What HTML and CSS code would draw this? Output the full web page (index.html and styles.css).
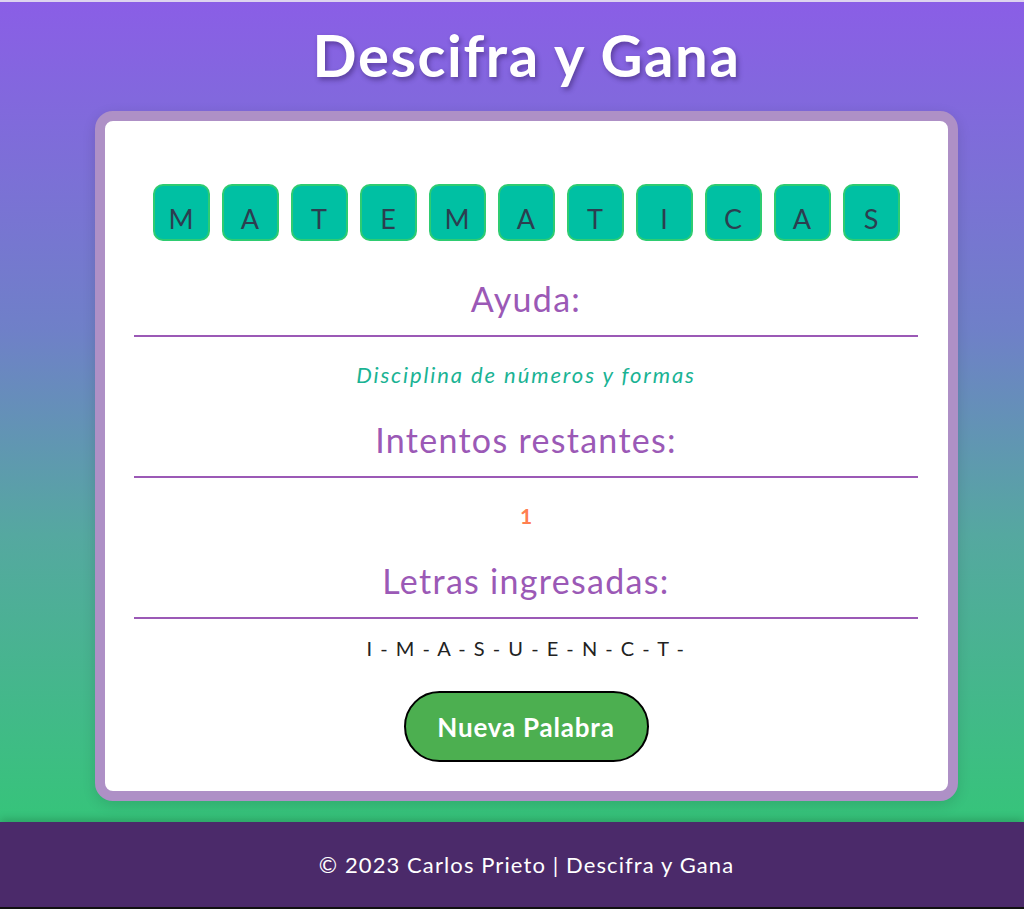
FILE: index.html
```html
<!DOCTYPE html>
<html lang="es">
<head>
<meta charset="utf-8">
<title>Descifra y Gana</title>
<link rel="stylesheet" href="styles.css">
</head>
<body>
<div class="page">
  <header class="header">
    <h1 class="title">Descifra y Gana</h1>
  </header>
  <main class="main">
    <section class="card">
      <div class="card-inner">
        <div class="tiles">
          <span class="tile">M</span>
          <span class="tile">A</span>
          <span class="tile">T</span>
          <span class="tile">E</span>
          <span class="tile">M</span>
          <span class="tile">A</span>
          <span class="tile">T</span>
          <span class="tile">I</span>
          <span class="tile">C</span>
          <span class="tile">A</span>
          <span class="tile">S</span>
        </div>
        <h2 class="section-title first">Ayuda:</h2>
        <p class="hint">Disciplina de números y formas</p>
        <h2 class="section-title">Intentos restantes:</h2>
        <p class="attempts">1</p>
        <h2 class="section-title">Letras ingresadas:</h2>
        <p class="letters">I - M - A - S - U - E - N - C - T -</p>
        <div class="actions">
          <button class="btn" type="button">Nueva Palabra</button>
        </div>
      </div>
    </section>
  </main>
</div>
<footer class="footer">
  <p class="footer-text">© 2023 Carlos Prieto | Descifra y Gana</p>
</footer>
</body>
</html>
```

FILE: styles.css
```css
* { box-sizing: border-box; }

html, body {
  margin: 0;
  padding: 0;
}

body {
  font-family: "Lato", "Noto Sans", sans-serif;
  border-top: 2px solid #ddd3ef;
  background: #111;
}

.page {
  background: linear-gradient(180deg, #8a5ee6 0%, #6f80c8 40%, #55a8a0 65%, #36c47a 100%);
  height: 820px;
  padding-left: 29px;
  display: flex;
  flex-direction: column;
  align-items: center;
}

.header {
  height: 109px;
  display: flex;
  align-items: flex-start;
  justify-content: center;
  width: 100%;
}

.title {
  margin: 18px 0 0;
  font-size: 58px;
  line-height: 70px;
  font-weight: 700;
  letter-spacing: 1.6px;
  color: #fff;
  text-shadow: 2px 3px 5px rgba(40, 20, 80, 0.45);
}

.main {
  width: 100%;
  display: flex;
  justify-content: center;
}

.card {
  width: 863px;
  border: 10px solid #ae90c6;
  border-radius: 18px;
  background: #fff;
  box-shadow: 0 4px 14px rgba(0, 0, 0, 0.12);
}

.card-inner {
  padding: 63px 30px 29px 29px;
  display: flex;
  flex-direction: column;
  align-items: stretch;
  text-align: center;
}

.tiles {
  display: flex;
  justify-content: center;
  gap: 12px;
}

.tile {
  width: 57px;
  height: 57px;
  background: #00c0a3;
  border: 2px solid #2ecc71;
  border-radius: 10px;
  color: #2c3e50;
  font-size: 27px;
  line-height: 1;
  display: flex;
  align-items: flex-end;
  justify-content: center;
  padding-bottom: 7px;
}

.section-title {
  margin: 31px 0 0;
  padding-bottom: 16px;
  border-bottom: 2px solid #9b59b6;
  color: #9b59b6;
  font-size: 34px;
  line-height: 40px;
  font-weight: 400;
  letter-spacing: 1.3px;
}

.section-title.first {
  margin-top: 38px;
}

.hint {
  margin: 24px 0 0;
  font-size: 22px;
  line-height: 28px;
  font-style: italic;
  letter-spacing: 1.9px;
  color: #1ab394;
}

.attempts {
  margin: 24px 0 0;
  font-size: 21px;
  line-height: 28px;
  font-weight: 700;
  color: #ff7f50;
}

.letters {
  margin: 15px 0 0;
  font-size: 20px;
  line-height: 28px;
  letter-spacing: 1.5px;
  color: #222;
}

.actions {
  margin-top: 29px;
  display: flex;
  justify-content: center;
}

.btn {
  width: 245px;
  height: 71px;
  background: #4caf50;
  color: #fff;
  border: 2px solid #000;
  border-radius: 36px;
  font-family: inherit;
  font-size: 26px;
  font-weight: 700;
  letter-spacing: 0.8px;
}

.footer {
  height: 85px;
  background: #4b2a6a;
  padding-left: 29px;
  display: flex;
  align-items: center;
  justify-content: center;
  box-shadow: 0 -3px 8px rgba(0, 0, 0, 0.18);
  position: relative;
}

.footer-text {
  margin: 0;
  color: #fff;
  font-size: 22px;
  line-height: 28px;
  letter-spacing: 1.1px;
}
```
